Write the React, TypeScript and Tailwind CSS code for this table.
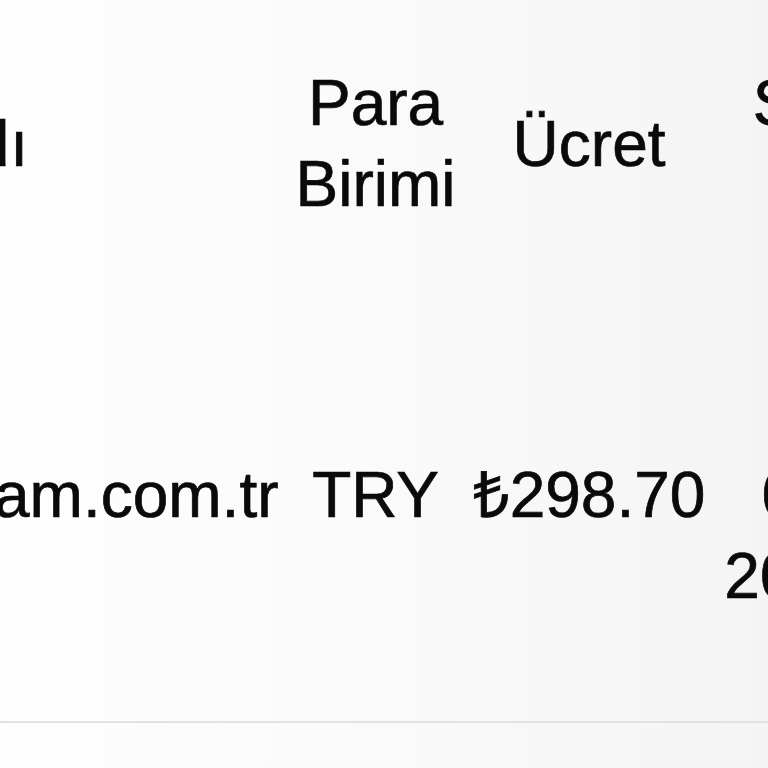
import React from "react";

export default function App() {
  return (
    <div
      className="w-[768px] h-[768px] overflow-hidden bg-gradient-to-r from-[#fefefe] via-[#fafafa] to-[#f4f4f4] text-[#0a0a0a]"
      style={{ fontFamily: '"Liberation Sans", Arial, sans-serif' }}
    >
      <table className="table-fixed border-collapse ml-[-325px] w-[1319px] text-[64px] leading-[81px] [-webkit-text-stroke:0.7px_#0a0a0a]">
        <colgroup>
          <col className="w-[610px]" />
          <col className="w-[178px]" />
          <col className="w-[248px]" />
          <col className="w-[274px]" />
          <col className="w-[6px]" />
        </colgroup>
        <thead>
          <tr>
            <th className="px-[6px] pt-[63px] pb-0 text-left font-normal align-middle whitespace-nowrap tracking-[1px]">
              Mağaza Adı
            </th>
            <th className="px-[6px] pt-[63px] pb-0 text-center font-normal align-middle">
              Para Birimi
            </th>
            <th className="px-[6px] pt-[63px] pb-0 text-center font-normal align-middle">
              Ücret
            </th>
            <th className="px-[8px] pt-[63px] pb-0 text-center font-normal align-middle">
              Sipariş Tarihi
            </th>
            <th />
          </tr>
        </thead>
        <tbody>
          <tr className="border-b-2 border-[#e2e2e2]">
            <td className="px-[6px] pt-[230px] pb-[104px] text-left align-top whitespace-nowrap">
              www.pazaram.com.tr
            </td>
            <td className="px-[6px] pt-[230px] pb-[104px] text-center align-top whitespace-nowrap">
              TRY
            </td>
            <td className="px-[6px] pt-[230px] pb-[104px] text-center align-top whitespace-nowrap">
              ₺298.70
            </td>
            <td className="px-[4px] pt-[230px] pb-[104px] text-center align-top whitespace-nowrap">
              06.01.
              <br />
              2025 Pzt
            </td>
            <td />
          </tr>
        </tbody>
      </table>
    </div>
  );
}
